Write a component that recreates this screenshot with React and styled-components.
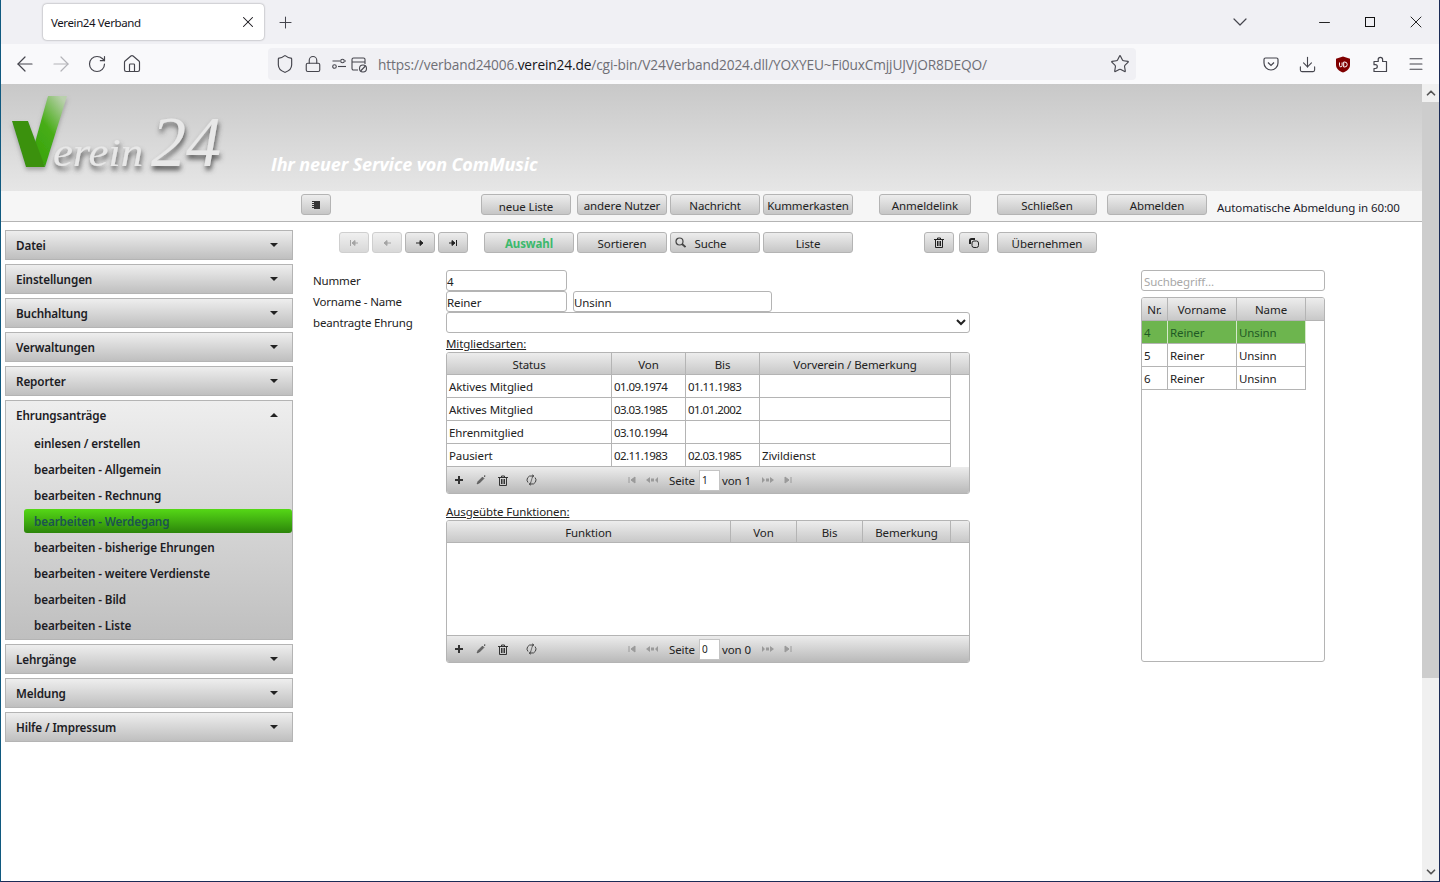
import React from 'react';
import styled, { createGlobalStyle, css } from 'styled-components';
import { ArrowLeft, ArrowRight, RotateCw, Home, Shield, Lock, Star, Download, Menu, ChevronDown, ChevronUp, X, Plus, Minus } from 'lucide-react';

const FONT = `"Noto Sans", "Open Sans", sans-serif`;
const LINE = '#b4b4b4';

const Global = createGlobalStyle`
    html, body { margin: 0; padding: 0; background: #fff; overflow: hidden; }
    * { box-sizing: border-box; }
    body { font-family: ${FONT}; font-size: 11.5px; letter-spacing: -0.1px; color: #1f1f1f; }
`;

const Window = styled.div`
    width: 1440px;
    height: 882px;
    display: flex;
    flex-direction: column;
    border-left: 1px solid #10597f;
    border-right: 1px solid #1b2b56;
    border-bottom: 1px solid #1b2b56;
    overflow: hidden;
`;

/* browser chrome */
const TabStrip = styled.div`
    height: 44px;
    flex: none;
    display: flex;
    align-items: flex-start;
    background: #f0f0f4;
    padding: 4px 0 0 42px;
`;

const Tab = styled.div`
    width: 221px;
    height: 36px;
    display: flex;
    align-items: center;
    justify-content: space-between;
    padding: 0 7px 0 8px;
    background: #fff;
    border-radius: 4px;
    box-shadow: 0 0 2px rgba(0, 0, 0, 0.45);
    font-size: 11.5px;
    letter-spacing: -0.4px;
    color: #15141a;
`;

const ChromeBtn = styled.div`
    width: ${({ $w }) => $w || 36}px;
    height: ${({ $h }) => $h || 36}px;
    flex: none;
    display: flex;
    align-items: center;
    justify-content: center;
    margin-left: ${({ $ml }) => $ml || 0}px;
    color: ${({ $off }) => ($off ? '#b3b3b8' : '#45454d')};
`;

const Spacer = styled.div`
    flex: 1;
`;

const NavBar = styled.div`
    height: 40px;
    flex: none;
    display: flex;
    align-items: center;
    background: #f9f9fb;
    padding-left: 6px;
`;

const UrlBar = styled.div`
    width: 868px;
    height: 32px;
    margin-left: 119px;
    display: flex;
    align-items: center;
    background: #f0f0f4;
    border-radius: 4px;
    padding-left: 7px;
    color: #45454d;
`;

const UrlIcon = styled.span`
    display: flex;
    margin-right: ${({ $mr }) => $mr}px;
`;

const UrlText = styled.div`
    flex: 1;
    padding-left: 1px;
    font-family: "Open Sans", sans-serif;
    font-size: 13.7px;
    letter-spacing: -0.125px;
    white-space: nowrap;
    color: #6f6f76;
    b {
        font-weight: 400;
        color: #15141a;
    }
`;

/* page */
const Viewport = styled.div`
    flex: 1;
    display: flex;
    min-height: 0;
`;

const Page = styled.div`
    width: 1421px;
    flex: none;
    display: flex;
    flex-direction: column;
`;

const Scrollbar = styled.div`
    width: 17px;
    flex: none;
    display: flex;
    flex-direction: column;
    background: #f0f0f0;
    color: #555;
`;

const ScrollBtn = styled.div`
    height: 18px;
    flex: none;
    display: flex;
    align-items: center;
    justify-content: center;
`;

const ScrollThumb = styled.div`
    height: 576px;
    flex: none;
    background: #cdcdcd;
`;

const Banner = styled.div`
    height: 107px;
    flex: none;
    display: flex;
    align-items: flex-end;
    background: linear-gradient(#c8c8c8, #e6e6e6);
`;

const Slogan = styled.div`
    margin: 0 0 15px 40px;
    font-family: "Open Sans", sans-serif;
    font-size: 18px;
    line-height: 24px;
    font-weight: 700;
    font-style: italic;
    letter-spacing: -0.13px;
    color: #fff;
`;

const TopBar = styled.div`
    height: 31px;
    flex: none;
    display: flex;
    align-items: flex-start;
    padding: 3px 0 0 300px;
    background: #f6f6f6;
    border-bottom: 1px solid ${LINE};
`;

const Button = styled.div`
    width: ${({ $w }) => $w || 90}px;
    height: 21px;
    flex: none;
    display: flex;
    align-items: center;
    justify-content: center;
    gap: 8px;
    margin-left: ${({ $ml }) => $ml || 0}px;
    padding-top: ${({ $low }) => ($low ? 4 : 1)}px;
    padding-right: ${({ $pr }) => $pr || 0}px;
    border: 1px solid ${LINE};
    border-radius: 3px;
    background: linear-gradient(#ededed, #c6c6c6);
    color: #222;
    white-space: nowrap;
    ${({ $active }) =>
        $active &&
        css`
            color: #3cb96c;
            font-weight: 700;
        `}
    ${({ $off }) =>
        $off &&
        css`
            color: #a4a4a4;
            border-color: #cfcfcf;
            background: linear-gradient(#f0f0f0, #d8d8d8);
        `}
`;

const IconFace = styled.span`
    display: flex;
    margin-top: -1px;
`;

const Countdown = styled.div`
    margin: 6px 0 0 10px;
    line-height: 16px;
    color: #1a1a2a;
    white-space: nowrap;
`;

const Body = styled.div`
    flex: 1;
    display: flex;
    align-items: flex-start;
    background: #fff;
`;

/* left accordion */
const Sidebar = styled.div`
    width: 288px;
    flex: none;
    margin: 8px 0 0 4px;
    display: flex;
    flex-direction: column;
    gap: 4px;
`;

const Section = styled.div`
    border: 1px solid ${LINE};
    background: linear-gradient(#eeeeee, #bfbfbf);
`;

const SectionHead = styled.div`
    height: 28px;
    display: flex;
    align-items: center;
    justify-content: space-between;
    padding: 0 14px 0 10px;
    font-size: 11.7px;
    font-weight: 600;
    letter-spacing: -0.12px;
    color: #1c1c24;
`;

const Caret = styled.span`
    width: 0;
    height: 0;
    border-left: 4px solid transparent;
    border-right: 4px solid transparent;
    ${({ $up }) =>
        $up
            ? css`
                  border-bottom: 4px solid #222;
              `
            : css`
                  border-top: 4px solid #222;
              `}
`;

const SubList = styled.div`
    margin-top: 1px;
    padding-bottom: 1px;
    display: flex;
    flex-direction: column;
`;

const SubItem = styled.div`
    height: 24px;
    margin: 1px 0 1px 18px;
    padding-left: 10px;
    display: flex;
    align-items: center;
    border-radius: 3px;
    font-size: 11.7px;
    font-weight: 600;
    letter-spacing: -0.12px;
    color: #1c1c24;
    ${({ $active }) =>
        $active &&
        css`
            background: linear-gradient(#55d816, #2c850a);
            color: #1c5350;
        `}
`;

/* main column */
const Main = styled.div`
    flex: 1;
    margin-left: 8px;
`;

const ActionBar = styled.div`
    height: 21px;
    margin-top: 10px;
    padding-left: 38px;
    display: flex;
`;

const Columns = styled.div`
    margin-top: 17px;
    padding-left: 12px;
    display: flex;
    align-items: flex-start;
    gap: 171px;
`;

const FormCol = styled.div`
    width: 657px;
    flex: none;
`;

const FormRow = styled.div`
    height: 21px;
    display: grid;
    grid-template-columns: 133px 1fr;
    align-items: center;
`;

const Label = styled.label`
    letter-spacing: -0.17px;
    color: #222;
`;

const Fields = styled.div`
    display: flex;
    gap: 6px;
`;

const fieldCss = css`
    height: 21px;
    padding: 1px 0 0 0;
    border: 1px solid ${LINE};
    border-radius: 3px;
    background: #fff;
    font-family: ${FONT};
    font-size: 11.5px;
    letter-spacing: -0.1px;
    color: #222;
    outline: none;
`;

const Input = styled.input`
    ${fieldCss}
    width: ${({ $w }) => $w}px;
`;

const Select = styled.select`
    ${fieldCss}
    width: 524px;
    padding: 0;
`;

const GridTitle = styled.div`
    height: ${({ $h }) => $h}px;
    margin-left: 133px;
    display: flex;
    align-items: flex-end;
    line-height: 16px;
    text-decoration: underline;
    color: #222;
`;

const Grid = styled.div`
    margin-left: 133px;
    display: flex;
    flex-direction: column;
    border: 1px solid ${LINE};
    border-radius: 3px;
    overflow: hidden;
`;

const GridRow = styled.div`
    display: grid;
    grid-template-columns: ${({ $cols }) => $cols};
    height: ${({ $h }) => $h || 23}px;
`;

const HeadCell = styled.div`
    display: flex;
    align-items: center;
    justify-content: center;
    padding-top: 1px;
    background: linear-gradient(#ededed, #c8c8c8);
    border-right: 1px solid ${LINE};
    border-bottom: 1px solid ${LINE};
    color: #222;
    &:last-child {
        border-right: none;
    }
`;

const Cell = styled.div`
    display: flex;
    align-items: center;
    padding-left: 2px;
    border-right: 1px solid ${LINE};
    border-bottom: 1px solid ${LINE};
    background: ${({ $on }) => ($on ? '#6db54e' : '#fff')};
    border-right-color: ${({ $on }) => ($on ? '#d5e9cb' : LINE)};
    color: ${({ $on }) => ($on ? '#1f5a25' : '#222')};
    white-space: nowrap;
    ${({ $date }) =>
        $date &&
        css`
            letter-spacing: -0.55px;
        `}
`;

const GridBody = styled.div`
    height: ${({ $h }) => $h}px;
    background: #fff;
    border-bottom: 1px solid ${LINE};
`;

const Pager = styled.div`
    height: 26px;
    display: flex;
    align-items: center;
    padding-left: 1px;
    background: linear-gradient(#ececec, #b9b9b9);
    color: #222;
`;

const PagerBtn = styled.div`
    width: ${({ $w }) => $w || 22}px;
    flex: none;
    display: flex;
    justify-content: center;
    color: ${({ $off }) => ($off ? '#9a9a9a' : '#333')};
`;

const PagerGap = styled.div`
    width: ${({ $w }) => $w}px;
    flex: none;
`;

const PageInput = styled.input`
    width: 21px;
    height: 21px;
    margin: 0 2px 0 4px;
    padding: 0 0 0 2px;
    border: 1px solid #c4c4c4;
    background: #fff;
    font-family: ${FONT};
    font-size: 10px;
    color: #222;
    outline: none;
`;

/* right list */
const ListCol = styled.div`
    width: 184px;
    flex: none;
    display: flex;
    flex-direction: column;
    gap: 6px;
`;

const Search = styled.input`
    ${fieldCss}
    width: 184px;
    padding: 1px 0 0 2px;
    &::placeholder {
        color: #a8a8a8;
        opacity: 1;
    }
`;

const ListBox = styled.div`
    height: 365px;
    border: 1px solid ${LINE};
    border-radius: 3px;
    overflow: hidden;
    background: #fff;
`;

const Svg = styled.svg`
    display: block;
`;

/* small drawn icons */
const Sliders = () => (
    <Svg width="16" height="16" viewBox="0 0 16 16" fill="none" stroke="currentColor" strokeWidth="1.1">
        <circle cx="11.5" cy="5" r="1.8" />
        <path d="M1.5 5h7.500M14 5h1" />
        <circle cx="3.5" cy="10.5" r="1.8" />
        <path d="M7 10.500h8" />
    </Svg>
);

const WindowBlock = () => (
    <Svg width="17" height="17" viewBox="0 0 17 17" fill="none" stroke="currentColor" strokeWidth="1.1">
        <path d="M7 14H2.500A1.500 1.500 0 0 1 1 12.500v-9A1.500 1.500 0 0 1 2.500 2h10A1.500 1.500 0 0 1 14 3.500V8M1 6h13" />
        <circle cx="12" cy="12.5" r="3.5" />
        <path d="M9.600 15l4.800-5" />
    </Svg>
);

const Pocket = () => (
    <Svg width="16" height="16" viewBox="0 0 16 16" fill="none" stroke="#45454d" strokeWidth="1.2">
        <path d="M2.500 2h11A1.500 1.500 0 0 1 15 3.500V7A7 7 0 0 1 1 7V3.500A1.500 1.500 0 0 1 2.500 2z" />
        <path d="M5 6.500l3 3 3-3" />
    </Svg>
);

const UBlock = () => (
    <Svg width="16" height="17" viewBox="0 0 16 17">
        <path d="M8 .5l7 2.200v6.300c0 3.500-3 6-7 7.500-4-1.500-7-4-7-7.500V2.700z" fill="#800000" />
        <path d="M4.500 6.500v3a1.300 1.300 0 0 0 2.600 0v-3M8.700 6v5h1a2.400 2.400 0 0 0 0-5z" fill="none" stroke="#fff" strokeWidth="1" />
    </Svg>
);

const PuzzlePiece = () => (
    <Svg width="16" height="17" viewBox="0 0 16 17" fill="none" stroke="#45454d" strokeWidth="1.2" strokeLinejoin="round">
        <path d="M2 5.500h4.200V3.600a2.200 2.200 0 1 1 4.400 0v1.900H14.500v10H2v-3h1.400a1.900 1.900 0 0 0 0-3.800H2z" />
    </Svg>
);

const Restore = () => (
    <Svg width="10" height="10" viewBox="0 0 10 10" fill="none" stroke="#111">
        <rect x="0.5" y="0.5" width="9" height="9" />
    </Svg>
);

const Logo = () => (
    <Svg width="230" height="107" viewBox="0 0 230 107">
        <defs>
            <linearGradient id="arm" x1="0.2" y1="1" x2="0.8" y2="0">
                <stop offset="0" stopColor="#38a30c" />
                <stop offset="0.5" stopColor="#47ad16" />
                <stop offset="1" stopColor="#b9d0ac" />
            </linearGradient>
            <filter id="shade" x="-10%" y="-20%" width="130%" height="160%">
                <feDropShadow dx="1" dy="4" stdDeviation="2.500" floodColor="#444" floodOpacity="0.9" />
            </filter>
            <filter id="soft" x="-10%" y="-10%" width="120%" height="130%">
                <feDropShadow dx="0" dy="3" stdDeviation="2" floodColor="#777" floodOpacity="0.55" />
            </filter>
        </defs>
        <g filter="url(#soft)">
            <polygon points="47,12 66,12 44,83 33,62" fill="url(#arm)" />
            <polygon points="11,37 27,37 44,83 25,83" fill="#3a9110" />
        </g>
        <g filter="url(#shade)" fill="#e8e8e8" fontFamily="Liberation Serif, serif" fontStyle="italic">
            <text x="52" y="82" fontSize="40" textLength="90" lengthAdjust="spacingAndGlyphs">erein</text>
            <text x="150" y="82" fontSize="72" textLength="70" lengthAdjust="spacingAndGlyphs">24</text>
        </g>
    </Svg>
);

const Bars = () => (
    <Svg width="10" height="10" viewBox="0 0 10 10">
        <rect x="3" y="1" width="6" height="8" fill="#333" />
        <path d="M1 1.500h2M1 3.500h2M1 5.500h2M1 7.500h2" stroke="#333" />
    </Svg>
);

const FIRST = 'M2 2v6M8 2v6L4 5z';
const LAST = 'M8 2v6M2 2v6l4-3z';

const SmallArrow = ({ d }) => (
    <Svg width="10" height="10" viewBox="0 0 10 10" fill="currentColor" stroke="currentColor" strokeWidth="1">
        <path d={d} />
    </Svg>
);

const Trash = () => (
    <Svg width="10" height="11" viewBox="0 0 10 11" fill="none" stroke="currentColor">
        <path d="M0 2.500h10M3.500 2.500V1h3v1.500M1.500 2.500v8h7v-8M3.500 4v5M5 4v5M6.500 4v5" />
    </Svg>
);

const Copy = () => (
    <Svg width="10" height="10" viewBox="0 0 10 10" fill="none" stroke="currentColor">
        <rect x="3" y="3" width="6.500" height="6.500" rx="2" />
        <path d="M1 6V2.500A1.500 1.500 0 0 1 2.500 1H6" strokeWidth="2" />
    </Svg>
);

const Lens = () => (
    <Svg width="11" height="11" viewBox="0 0 11 11" fill="none" stroke="#444" strokeWidth="1.2">
        <circle cx="4.500" cy="4.500" r="3.500" />
        <path d="M7 7l3.500 3" strokeWidth="1.800" />
    </Svg>
);

const PlusIcon = () => (
    <Svg width="10" height="10" viewBox="0 0 10 10">
        <path d="M5 1v8M1 5h8" stroke="#333" strokeWidth="2" />
    </Svg>
);

const Pencil = () => (
    <Svg width="10" height="10" viewBox="0 0 10 10" fill="none" stroke="#444">
        <path d="M1 9l1-2.500L6.500 2 8 3.500 3.500 8z" fill="#666" strokeWidth="0.500" />
        <path d="M8.500 0.500v1.500M8 1h1.500" strokeWidth="0.700" />
    </Svg>
);

const Refresh = () => (
    <Svg width="11" height="12" viewBox="0 0 11 12" fill="none" stroke="#444">
        <path d="M2 8.500A4 4 0 0 1 6 2h1.500M9 3.500A4 4 0 0 1 5 10H3.500" />
        <path d="M6.500 .500l1.500 1.500-1.500 1.500M4.500 8.500L3 10l1.500 1.500M7 1l-3 10" strokeWidth="0.700" />
    </Svg>
);

const Double = ({ flip }) => (
    <Svg width="12" height="8" viewBox="0 0 12 8" fill="currentColor" stroke="none">
        <path d={flip ? 'M0 1l3 3-3 3zM4 2.500v3h3v-3zM8 1v6l4-3z' : 'M12 1L9 4l3 3zM8 2.500v3H5v-3zM4 1v6L0 4z'} />
    </Svg>
);

const MENU = ['Datei', 'Einstellungen', 'Buchhaltung', 'Verwaltungen', 'Reporter'];
const MENU_AFTER = ['Lehrgänge', 'Meldung', 'Hilfe / Impressum'];
const HONOURS = [
    'einlesen / erstellen',
    'bearbeiten - Allgemein',
    'bearbeiten - Rechnung',
    'bearbeiten - Werdegang',
    'bearbeiten - bisherige Ehrungen',
    'bearbeiten - weitere Verdienste',
    'bearbeiten - Bild',
    'bearbeiten - Liste',
];

const MEMBER_HEAD = '165px 74px 74px 191px 1fr';
const MEMBER_ROWS = [
    ['Aktives Mitglied', '01.09.1974', '01.11.1983', ''],
    ['Aktives Mitglied', '03.03.1985', '01.01.2002', ''],
    ['Ehrenmitglied', '03.10.1994', '', ''],
    ['Pausiert', '02.11.1983', '02.03.1985', 'Zivildienst'],
];
const FUNCTION_HEAD = '284px 66px 66px 88px 1fr';

const LIST_COLS = '26px 69px 69px 1fr';
const LIST_ROWS = [
    ['4', 'Reiner', 'Unsinn'],
    ['5', 'Reiner', 'Unsinn'],
    ['6', 'Reiner', 'Unsinn'],
];

const GridPager = ({ page, total }) => (
    <Pager>
        <PagerBtn><PlusIcon /></PagerBtn>
        <PagerBtn><Pencil /></PagerBtn>
        <PagerBtn><Trash /></PagerBtn>
        <PagerGap $w={6} />
        <PagerBtn><Refresh /></PagerBtn>
        <PagerGap $w={80} />
        <PagerBtn $w={20} $off><SmallArrow d={FIRST} /></PagerBtn>
        <PagerBtn $w={20} $off><Double /></PagerBtn>
        <PagerGap $w={7} />
        Seite
        <PageInput defaultValue={page} readOnly />
        von {total}
        <PagerGap $w={7} />
        <PagerBtn $w={20} $off><Double flip /></PagerBtn>
        <PagerBtn $w={20} $off><SmallArrow d={LAST} /></PagerBtn>
    </Pager>
);

export default function App() {
    return (
        <>
            <Global />
            <Window>
                <TabStrip>
                    <Tab>
                        Verein24 Verband
                        <X size={18} strokeWidth={1.4} />
                    </Tab>
                    <ChromeBtn $w={42}><Plus size={19} strokeWidth={1.3} /></ChromeBtn>
                    <Spacer />
                    <ChromeBtn $w={24}><ChevronDown size={24} strokeWidth={1.2} /></ChromeBtn>
                    <ChromeBtn $w={46} $ml={49}><Minus size={17} strokeWidth={1.3} color="#111" /></ChromeBtn>
                    <ChromeBtn $w={46}><Restore /></ChromeBtn>
                    <ChromeBtn $w={46}><X size={20} strokeWidth={1.1} color="#111" /></ChromeBtn>
                </TabStrip>
                <NavBar>
                    <ChromeBtn><ArrowLeft size={24} strokeWidth={1.2} /></ChromeBtn>
                    <ChromeBtn $off><ArrowRight size={24} strokeWidth={1.2} /></ChromeBtn>
                    <ChromeBtn><RotateCw size={20} strokeWidth={1.4} /></ChromeBtn>
                    <ChromeBtn $w={34}><Home size={20} strokeWidth={1.4} /></ChromeBtn>
                    <UrlBar>
                        <UrlIcon $mr={9}><Shield size={20} strokeWidth={1.4} /></UrlIcon>
                        <UrlIcon $mr={9}><Lock size={18} strokeWidth={1.5} /></UrlIcon>
                        <UrlIcon $mr={4}><Sliders /></UrlIcon>
                        <UrlIcon $mr={9}><WindowBlock /></UrlIcon>
                        <UrlText>https://verband24006.<b>verein24.de</b>/cgi-bin/V24Verband2024.dll/YOXYEU~Fi0uxCmjjUJVjOR8DEQO/</UrlText>
                        <ChromeBtn $w={32} $h={32}><Star size={20} strokeWidth={1.4} /></ChromeBtn>
                    </UrlBar>
                    <ChromeBtn $ml={117}><Pocket /></ChromeBtn>
                    <ChromeBtn><Download size={19} strokeWidth={1.4} /></ChromeBtn>
                    <ChromeBtn><UBlock /></ChromeBtn>
                    <ChromeBtn $w={37}><PuzzlePiece /></ChromeBtn>
                    <ChromeBtn><Menu size={18} strokeWidth={1.4} /></ChromeBtn>
                </NavBar>
                <Viewport>
                    <Page>
                        <Banner>
                            <Logo />
                            <Slogan>Ihr neuer Service von ComMusic</Slogan>
                        </Banner>
                        <TopBar>
                            <Button $w={30}><IconFace><Bars /></IconFace></Button>
                            <Button $ml={150} $low>neue Liste</Button>
                            <Button $ml={6}>andere Nutzer</Button>
                            <Button $ml={3}>Nachricht</Button>
                            <Button $ml={3}>Kummerkasten</Button>
                            <Button $ml={26} $w={92}>Anmeldelink</Button>
                            <Button $ml={26} $w={100}>Schließen</Button>
                            <Button $ml={10} $w={100}>Abmelden</Button>
                            <Countdown>Automatische Abmeldung in 60:00</Countdown>
                        </TopBar>
                        <Body>
                            <Sidebar>
                                {MENU.map((name) => (
                                    <Section key={name}>
                                        <SectionHead>{name}<Caret /></SectionHead>
                                    </Section>
                                ))}
                                <Section>
                                    <SectionHead>Ehrungsanträge<Caret $up /></SectionHead>
                                    <SubList>
                                        {HONOURS.map((item) => (
                                            <SubItem key={item} $active={item.endsWith('Werdegang')}>{item}</SubItem>
                                        ))}
                                    </SubList>
                                </Section>
                                {MENU_AFTER.map((name) => (
                                    <Section key={name}>
                                        <SectionHead>{name}<Caret /></SectionHead>
                                    </Section>
                                ))}
                            </Sidebar>
                            <Main>
                                <ActionBar>
                                    <Button $w={30} $off><IconFace><SmallArrow d="M1.500 2v6M9 5H5M6 2.500L3 5l3 2.500z" /></IconFace></Button>
                                    <Button $w={30} $ml={3} $off><IconFace><SmallArrow d="M9 5H4M5 2.500L2 5l3 2.500z" /></IconFace></Button>
                                    <Button $w={30} $ml={3}><IconFace><SmallArrow d="M1 5h5M5 2.500L8 5 5 7.500z" /></IconFace></Button>
                                    <Button $w={30} $ml={3}><IconFace><SmallArrow d="M8.500 2v6M1 5h4M4 2.500L7 5 4 7.500z" /></IconFace></Button>
                                    <Button $ml={16} $active>Auswahl</Button>
                                    <Button $ml={3}>Sortieren</Button>
                                    <Button $ml={3} $pr={28}><IconFace><Lens /></IconFace>Suche</Button>
                                    <Button $ml={3}>Liste</Button>
                                    <Button $w={30} $ml={71}><IconFace><Trash /></IconFace></Button>
                                    <Button $w={30} $ml={5}><IconFace><Copy /></IconFace></Button>
                                    <Button $w={100} $ml={8}>Übernehmen</Button>
                                </ActionBar>
                                <Columns>
                                    <FormCol>
                                        <FormRow>
                                            <Label>Nummer</Label>
                                            <Fields><Input $w={121} defaultValue="4" /></Fields>
                                        </FormRow>
                                        <FormRow>
                                            <Label>Vorname - Name</Label>
                                            <Fields>
                                                <Input $w={121} defaultValue="Reiner" />
                                                <Input $w={199} defaultValue="Unsinn" />
                                            </Fields>
                                        </FormRow>
                                        <FormRow>
                                            <Label>beantragte Ehrung</Label>
                                            <Select><option></option></Select>
                                        </FormRow>
                                        <GridTitle $h={19}>Mitgliedsarten:</GridTitle>
                                        <Grid>
                                            <GridRow $cols={MEMBER_HEAD} $h={22}>
                                                <HeadCell>Status</HeadCell>
                                                <HeadCell>Von</HeadCell>
                                                <HeadCell>Bis</HeadCell>
                                                <HeadCell>Vorverein / Bemerkung</HeadCell>
                                                <HeadCell />
                                            </GridRow>
                                            {MEMBER_ROWS.map((row, i) => (
                                                <GridRow key={i} $cols="165px 74px 74px 191px">
                                                    {row.map((value, j) => <Cell key={j} $date={j === 1 || j === 2}>{value}</Cell>)}
                                                </GridRow>
                                            ))}
                                            <GridPager page="1" total="1" />
                                        </Grid>
                                        <GridTitle $h={26}>Ausgeübte Funktionen:</GridTitle>
                                        <Grid>
                                            <GridRow $cols={FUNCTION_HEAD} $h={22}>
                                                <HeadCell>Funktion</HeadCell>
                                                <HeadCell>Von</HeadCell>
                                                <HeadCell>Bis</HeadCell>
                                                <HeadCell>Bemerkung</HeadCell>
                                                <HeadCell />
                                            </GridRow>
                                            <GridBody $h={93} />
                                            <GridPager page="0" total="0" />
                                        </Grid>
                                    </FormCol>
                                    <ListCol>
                                        <Search placeholder="Suchbegriff..." />
                                        <ListBox>
                                            <GridRow $cols={LIST_COLS}>
                                                <HeadCell>Nr.</HeadCell>
                                                <HeadCell>Vorname</HeadCell>
                                                <HeadCell>Name</HeadCell>
                                                <HeadCell />
                                            </GridRow>
                                            {LIST_ROWS.map((row, i) => (
                                                <GridRow key={row[0]} $cols="26px 69px 69px">
                                                    {row.map((value, j) => <Cell key={j} $on={i === 0}>{value}</Cell>)}
                                                </GridRow>
                                            ))}
                                        </ListBox>
                                    </ListCol>
                                </Columns>
                            </Main>
                        </Body>
                    </Page>
                    <Scrollbar>
                        <ScrollBtn><ChevronUp size={14} strokeWidth={3} /></ScrollBtn>
                        <ScrollThumb />
                        <Spacer />
                        <ScrollBtn><ChevronDown size={14} strokeWidth={3} /></ScrollBtn>
                    </Scrollbar>
                </Viewport>
            </Window>
        </>
    );
}
